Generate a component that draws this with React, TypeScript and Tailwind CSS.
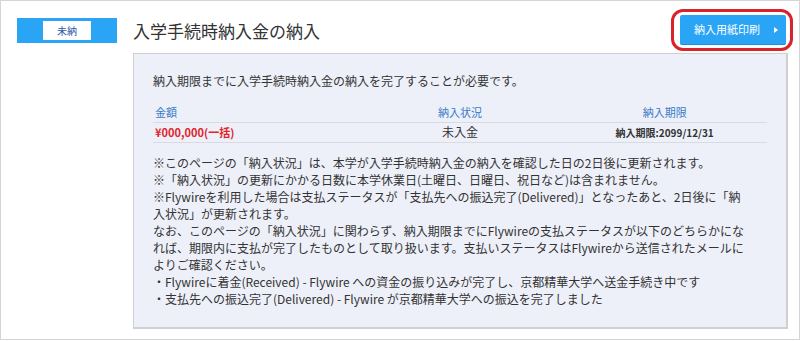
const jp = "font-['Meiryo','Noto_Sans_CJK_JP',sans-serif]";

const notes = [
  "※このページの「納入状況」は、本学が入学手続時納入金の納入を確認した日の2日後に更新されます。",
  "※「納入状況」の更新にかかる日数に本学休業日(土曜日、日曜日、祝日など)は含まれません。",
  "※Flywireを利用した場合は支払ステータスが「支払先への振込完了(Delivered)」となったあと、2日後に「納",
  "入状況」が更新されます。",
  "なお、このページの「納入状況」に関わらず、納入期限までにFlywireの支払ステータスが以下のどちらかにな",
  "れば、期限内に支払が完了したものとして取り扱います。支払いステータスはFlywireから送信されたメールに",
  "よりご確認ください。",
  "・Flywireに着金(Received) - Flywire への資金の振り込みが完了し、京都精華大学へ送金手続き中です",
  "・支払先への振込完了(Delivered) - Flywire が京都精華大学への振込を完了しました",
];

const App = () => {
  return (
    <div className={`w-[800px] h-[340px] border border-[#d4d4d4] bg-white text-[#333] ${jp}`}>
      <header className="flex items-center pt-[14px] pl-[16px] pr-[13px]">
        <div className="w-[100px] h-[25px] bg-[#2aa4f5] flex items-center justify-center">
          <span className="w-[48px] h-[19px] bg-white flex items-center justify-center text-[10px] text-[#2b5aa6]">
            未納
          </span>
        </div>
        <h1 className="ml-[16px] text-[17px] leading-none">入学手続時納入金の納入</h1>

        <div className="ml-auto relative">
          <button className="w-[106px] h-[30px] bg-[#2aa4f5] rounded-[2px] border-b border-[#1f8fd9] flex items-center justify-end pr-[8px] text-white text-[11px]">
            <span className="mr-[14px]">納入用紙印刷</span>
            <span className="w-0 h-0 border-y-[3px] border-y-transparent border-l-[4px] border-l-white" />
          </button>
          {/* red highlight around the button */}
          <div className="absolute -left-[9px] -right-[7px] -top-[6px] -bottom-[6px] border-[3px] border-[#d8232a] rounded-[12px]" />
        </div>
      </header>

      <section className="ml-[132px] mr-[11px] mt-[8px] h-[276px] bg-[#eef0f9] border border-[#cfcfcf] border-r-2 border-b-2 px-[19px] pt-[18px]">
        <p className="text-[12px] leading-[17px]">
          納入期限までに入学手続時納入金の納入を完了することが必要です。
        </p>

        <table className="w-full mt-[14px] table-fixed">
          <thead>
            <tr className="h-[19px] border-b border-[#d9dbe3] text-[11px] text-[#3a7bc8]">
              <th className="font-normal text-left pl-[2px]">金額</th>
              <th className="font-normal">納入状況</th>
              <th className="font-normal">納入期限</th>
            </tr>
          </thead>
          <tbody>
            <tr className="h-[20px] border-b border-[#d9dbe3]">
              <td className="pl-[2px] text-[11px] font-bold text-[#e0252b]">¥000,000(一括)</td>
              <td className="text-center text-[12px]">未入金</td>
              <td className="text-center text-[10px] font-bold">納入期限:2099/12/31</td>
            </tr>
          </tbody>
        </table>

        <div className="mt-[11px] text-[12px] leading-[17px] whitespace-nowrap">
          {notes.map((n, i) => (
            <div key={i}>{n}</div>
          ))}
        </div>
      </section>
    </div>
  );
};

export default App;
